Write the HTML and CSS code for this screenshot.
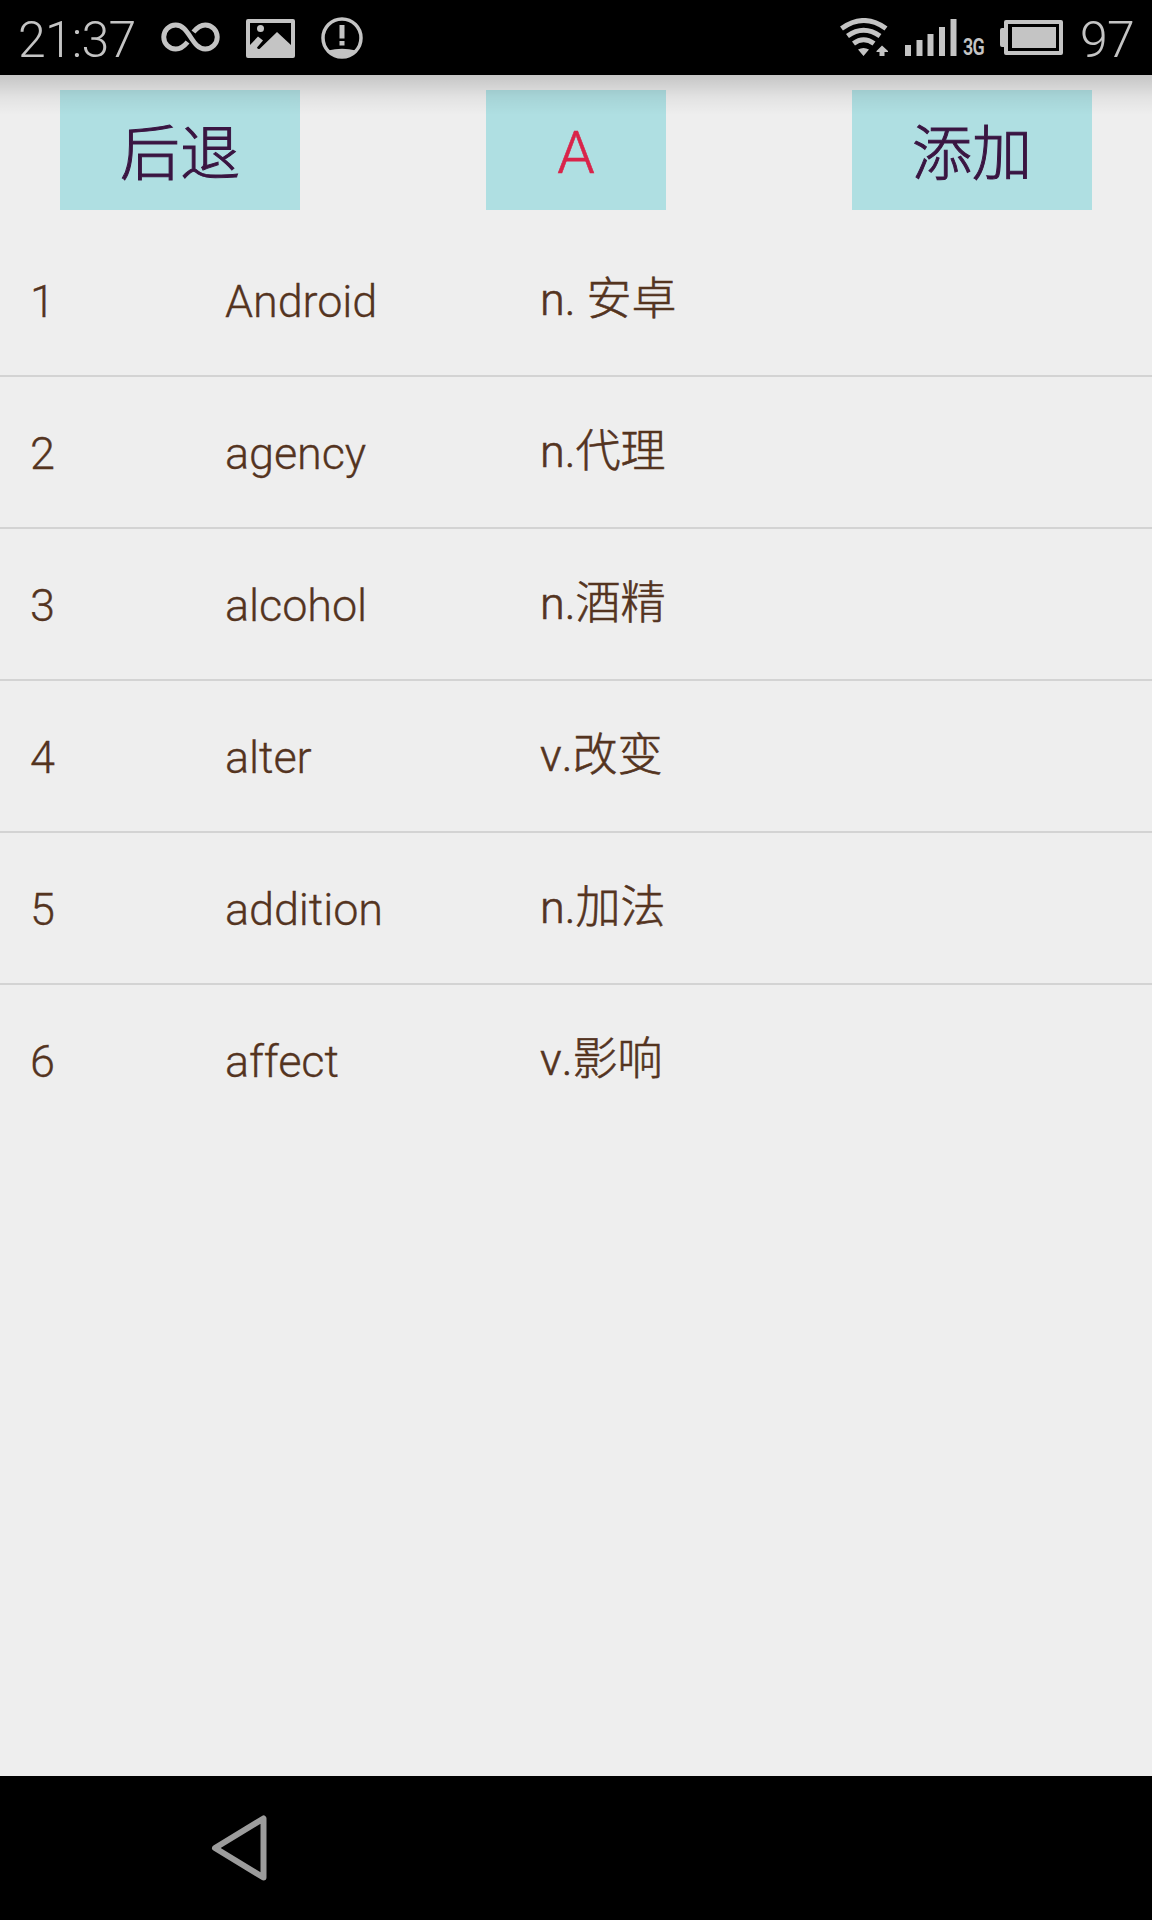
FILE: index.html
```html
<!DOCTYPE html>
<html lang="zh-CN">
<head>
<meta charset="utf-8">
<title>A</title>
<link rel="stylesheet" href="styles.css">
</head>
<body>
<div class="screen">
  <header class="status">
    <span class="clock">21:37</span>
    <svg class="icon infinity" width="59" height="30" viewBox="0 0 60 30"><path d="M33 10C37 5 40 2.800 45 2.800A12.200 12.200 0 0 1 45 27.200C31 27.200 29 2.800 15 2.800A12.200 12.200 0 0 0 15 27.200C20 27.200 23 25 27 20" fill="none" stroke="#c4c4c4" stroke-width="5"/></svg>
    <svg class="icon picture" width="49" height="39" viewBox="0 0 49 39"><path fill="#c4c4c4" fill-rule="evenodd" d="M2 0H47Q49 0 49 2V37Q49 39 47 39H2Q0 39 0 37V2Q0 0 2 0ZM4 4V26L12 17.500 17 21.500 11 28.500Q12 31 14 29.500L31 13 45 26V4Z"/><circle cx="14.500" cy="9.500" r="3.500" fill="#c4c4c4"/></svg>
    <svg class="icon alert" width="42" height="42" viewBox="0 0 42 42"><circle cx="21" cy="21" r="19" fill="none" stroke="#c4c4c4" stroke-width="3.500"/><path fill="#c4c4c4" d="M18.500 8h5v13.500h-5zM18.500 24h5v4.500h-5zM7 33.500Q21 30 35 33.500Q28 40 21 40T7 33.500Z"/></svg>
    <span class="spacer"></span>
    <svg class="icon wifi" width="48" height="38" viewBox="0 0 48 38"><g fill="none" stroke="#c4c4c4" stroke-width="5"><path d="M1.500 10.500Q24-5.500 46 10.500"/><path d="M7.500 18Q23.500 6.500 40 18"/><path d="M13.500 25.500Q23.500 18 34 25.500"/></g><path fill="#c4c4c4" d="M18 31.500Q23.500 28.500 29 31.500L23.500 38ZM42 27.500L48 33V34H44.500V38H39.500V34H36.500V33Z"/></svg>
    <svg class="icon signal" width="52" height="37" viewBox="0 0 52 37"><path fill="#c4c4c4" d="M0 26h6v11H0zM11.500 21h6v16h-6zM22.500 15h6v22h-6zM34 8h6v29h-6zM45.500 0h6v37h-6z"/></svg>
    <span class="net">3G</span>
    <svg class="icon battery" width="64" height="35" viewBox="0 0 64 35"><path fill="#c4c4c4" fill-rule="evenodd" d="M6 0H61Q63 0 63 2V33Q63 35 61 35H6Q4 35 4 33V27H2Q0 27 0 25V10Q0 8 2 8H4V2Q4 0 6 0ZM8 4V31H59V4ZM12 7H56V28H12Z"/></svg>
    <span class="level">97</span>
  </header>
  <main class="content">
    <nav class="toolbar">
      <button class="btn action">后退</button>
      <div class="btn letter">A</div>
      <button class="btn action">添加</button>
    </nav>
    <ul class="words">
      <li class="row"><span class="num">1</span><span class="word">Android</span><span class="meaning">n. 安卓</span></li>
      <li class="row"><span class="num">2</span><span class="word">agency</span><span class="meaning">n.代理</span></li>
      <li class="row"><span class="num">3</span><span class="word">alcohol</span><span class="meaning">n.酒精</span></li>
      <li class="row"><span class="num">4</span><span class="word">alter</span><span class="meaning">v.改变</span></li>
      <li class="row"><span class="num">5</span><span class="word">addition</span><span class="meaning">n.加法</span></li>
      <li class="row"><span class="num">6</span><span class="word">affect</span><span class="meaning">v.影响</span></li>
    </ul>
  </main>
  <footer class="navbar">
    <svg width="56" height="66" viewBox="0 0 56 66"><path d="M4 33L52.500 3.500V62.500Z" fill="none" stroke="#9c9c9c" stroke-width="6" stroke-linejoin="round"/></svg>
  </footer>
</div>
</body>
</html>
```
FILE: styles.css
```css
* {
  box-sizing: border-box;
}

body {
  margin: 0;
  background: #eee;
  font-family: Roboto, "Noto Sans CJK SC", sans-serif;
  font-weight: 300;
}

.screen {
  display: flex;
  flex-direction: column;
  width: 1152px;
  height: 1920px;
}

.status {
  display: flex;
  align-items: flex-start;
  height: 75px;
  padding: 0 18px;
  background: #000;
  color: #c4c4c4;
}

.icon {
  display: block;
  flex: none;
}

.clock,
.level {
  margin-top: 10px;
  font-size: 50px;
  line-height: 60px;
  letter-spacing: -0.8px;
}

.clock {
  width: 143px;
}

.level {
  width: 54px;
}

.infinity {
  margin-top: 22px;
}

.picture {
  margin: 19px 0 0 26px;
}

.alert {
  margin: 17px 0 0 26px;
}

.spacer {
  flex: 1;
}

.wifi {
  margin: 18px 17px 0 0;
}

.signal {
  margin: 19px 6px 0 0;
}

.net {
  width: 37px;
  margin-top: 37px;
  font-size: 23px;
  font-weight: 600;
  line-height: 22px;
  letter-spacing: -1px;
  transform: scaleX(0.78);
  transform-origin: left;
}

.battery {
  margin: 20px 16px 0 0;
}

.content {
  position: relative;
  flex: 1;
}

.content::before {
  content: "";
  position: absolute;
  inset: 0 0 auto;
  height: 40px;
  background: linear-gradient(rgba(0, 0, 0, 0.17), rgba(0, 0, 0, 0.13) 20%, rgba(0, 0, 0, 0.05) 55%, transparent);
}

.toolbar {
  display: flex;
  justify-content: space-between;
  height: 150px;
  padding: 15px 60px;
}

.btn {
  width: 240px;
  height: 120px;
  padding: 0;
  border: 0;
  background: #afdfe2;
  color: #3a1542;
  font: inherit;
  font-size: 60px;
  line-height: 126px;
  text-align: center;
  -webkit-text-stroke: 0.6px;
}

.action {
  padding-top: 2px;
  -webkit-text-stroke: 1px;
}

.letter {
  width: 180px;
  color: #d9244a;
}

.words {
  margin: 0;
  padding: 0;
  list-style: none;
}

.row {
  display: flex;
  height: 152px;
  padding-left: 30px;
  border-bottom: 2px solid #d3d3d3;
  color: #54341f;
  font-size: 45px;
  line-height: 150px;
  -webkit-text-stroke: 0.3px;
}

.row:last-child {
  border-bottom: 0;
}

.num,
.word {
  padding-top: 2px;
}

.num {
  width: 195px;
}

.word {
  width: 315px;
  letter-spacing: -0.1px;
}

.meaning {
  font-kerning: none;
  -webkit-text-stroke: 0.6px;
}

.navbar {
  height: 144px;
  padding: 39px 0 0 211px;
  background: #000;
}
```
